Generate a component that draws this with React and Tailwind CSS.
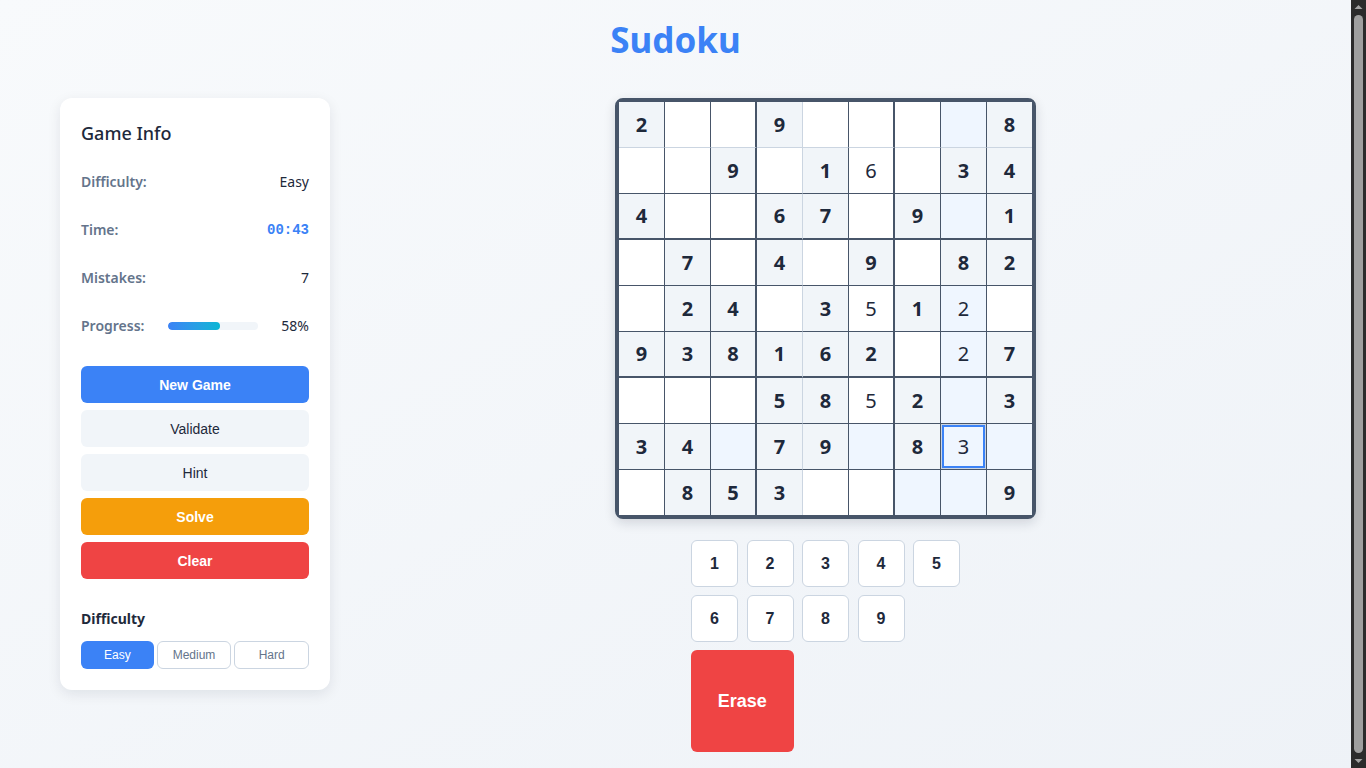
import React from "react";

const rows = [
  "2 . . 9 . . . . 8",
  ". . 9 . 1 *6 . 3 4",
  "4 . . 6 7 . 9 . 1",
  ". 7 . 4 . 9 . 8 2",
  ". 2 4 . 3 *5 1 *2 .",
  "9 3 8 1 6 2 . *2 7",
  ". . . 5 8 *5 2 . 3",
  "3 4 . 7 9 . 8 *3 .",
  ". 8 5 3 . . . . 9",
].map((r) => r.split(" "));

const SEL_R = 7;
const SEL_C = 7;

function rightBorder(c) {
  if (c === 8) return "";
  if (c === 2 || c === 5) return "border-r-2 border-r-[#475569]";
  if (c === 3) return "border-r border-r-[#cbd5e1]";
  return "border-r border-r-[#475569]";
}

function bottomBorder(r) {
  if (r === 8) return "";
  if (r === 2 || r === 5) return "border-b-2 border-b-[#475569]";
  if (r === 0) return "border-b border-b-[#cbd5e1]";
  return "border-b border-b-[#475569]";
}

function Cell({ r, c, tok }) {
  const given = tok !== "." && !tok.startsWith("*");
  const user = tok.startsWith("*");
  const value = tok === "." ? "" : user ? tok.slice(1) : tok;
  const related =
    r === SEL_R ||
    c === SEL_C ||
    (Math.floor(r / 3) === Math.floor(SEL_R / 3) && Math.floor(c / 3) === Math.floor(SEL_C / 3));
  const selected = r === SEL_R && c === SEL_C;
  let bg = "bg-white";
  if (given) bg = "bg-[#f1f5f9]";
  else if (related) bg = "bg-[#eff6ff]";
  const w = c < 8 ? "w-[46px]" : "w-[45px]";
  const h = r < 8 ? "h-[46px]" : "h-[45px]";
  return (
    <div
      className={`${w} ${h} ${bg} ${rightBorder(c)} ${bottomBorder(r)} flex items-center justify-center text-xl text-[#1e293b] ${
        given ? "font-bold" : "font-normal"
      } ${selected ? "shadow-[inset_0_0_0_1px_#cbd5e1,inset_0_0_0_3px_#3b82f6]" : ""}`}
    >
      {value}
    </div>
  );
}

function InfoRow({ label, children }) {
  return (
    <div className="flex h-12 items-center justify-between text-sm">
      <span className="font-semibold text-[#64748b]">{label}</span>
      {children}
    </div>
  );
}

function FakeScrollbar() {
  return (
    <div className="fixed top-0 right-0 flex h-screen w-[15px] flex-col items-center bg-[#2b2b2b]">
      <svg width="15" height="15" viewBox="0 0 15 15" className="shrink-0">
        <path d="M3.5 9 L7.5 5 L11.5 9 Z" fill="#a3a3a3" />
      </svg>
      <div className="w-[9px] flex-1 rounded-full bg-[#9f9f9f]" />
      <svg width="15" height="15" viewBox="0 0 15 15" className="shrink-0">
        <path d="M3.5 6 L7.5 10 L11.5 6 Z" fill="#a3a3a3" />
      </svg>
    </div>
  );
}

export default function App() {
  return (
    <div className="min-h-screen w-full bg-gradient-to-br from-[#f8fafc] to-[#eef2f7] font-['Noto_Sans',sans-serif]">
      <div className="w-[calc(100%-15px)] pt-5 pb-9">
        <h1 className="text-center text-[35px] leading-10 font-bold text-[#3b82f6]">Sudoku</h1>
        <div className="mt-[38px] flex items-start gap-[30px] px-[60px]">
          <aside className="w-[270px] shrink-0 rounded-xl bg-white p-[21px] shadow-[0_4px_14px_rgba(15,23,42,0.09)]">
            <h2 className="mb-[11px] text-lg leading-7 font-medium text-[#1e293b]">Game Info</h2>
            <InfoRow label="Difficulty:">
              <span className="text-[#1e293b]">Easy</span>
            </InfoRow>
            <InfoRow label="Time:">
              <span className="font-['Liberation_Mono',monospace] font-semibold text-[#3b82f6]">00:43</span>
            </InfoRow>
            <InfoRow label="Mistakes:">
              <span className="text-[#1e293b]">7</span>
            </InfoRow>
            <InfoRow label="Progress:">
              <div className="h-2 w-[90px] overflow-hidden rounded-full bg-[#f1f5f9]">
                <div className="h-full rounded-full bg-gradient-to-r from-[#3b82f6] to-[#06b6d4]" style={{ width: "58%" }} />
              </div>
              <span className="text-[#1e293b]">58%</span>
            </InfoRow>

            <div className="mt-4 flex flex-col gap-[7px] font-['Liberation_Sans',Arial,sans-serif] text-sm">
              <button className="h-[37px] rounded-md bg-[#3b82f6] font-semibold text-white">New Game</button>
              <button className="h-[37px] rounded-md bg-[#f1f5f9] text-[#1e293b]">Validate</button>
              <button className="h-[37px] rounded-md bg-[#f1f5f9] text-[#1e293b]">Hint</button>
              <button className="h-[37px] rounded-md bg-[#f59e0b] font-semibold text-white">Solve</button>
              <button className="h-[37px] rounded-md bg-[#ef4444] font-semibold text-white">Clear</button>
            </div>

            <h3 className="mt-[30px] text-sm leading-5 font-bold text-[#1e293b]">Difficulty</h3>
            <div className="mt-3 flex gap-[3px] font-['Liberation_Sans',Arial,sans-serif] text-xs">
              <button className="h-7 flex-1 rounded-md bg-[#3b82f6] text-white">Easy</button>
              <button className="h-7 flex-1 rounded-md border border-[#cbd5e1] bg-white text-[#64748b]">Medium</button>
              <button className="h-7 flex-1 rounded-md border border-[#cbd5e1] bg-white text-[#64748b]">Hard</button>
            </div>
          </aside>

          <main className="flex flex-1 flex-col items-center">
            <div className="grid grid-cols-[repeat(8,46px)_45px] rounded-lg border-4 border-[#475569] bg-[#475569] shadow-[0_4px_12px_rgba(15,23,42,0.14)]">
              {rows.map((row, r) => row.map((tok, c) => <Cell key={`${r}-${c}`} r={r} c={c} tok={tok} />))}
            </div>

            <div className="mt-[21px] grid grid-cols-[repeat(5,47px)] auto-rows-[47px] gap-x-[8.5px] gap-y-2 font-['Liberation_Sans',Arial,sans-serif]">
              {[1, 2, 3, 4, 5, 6, 7, 8, 9].map((n) => (
                <button
                  key={n}
                  className="rounded-md border border-[#cbd5e1] bg-white text-base font-bold text-[#1e293b]"
                >
                  {n}
                </button>
              ))}
              <div />
              <button className="col-span-2 row-span-2 rounded-md bg-[#ef4444] text-lg font-bold text-white">Erase</button>
            </div>
          </main>
        </div>
      </div>
      <FakeScrollbar />
    </div>
  );
}
